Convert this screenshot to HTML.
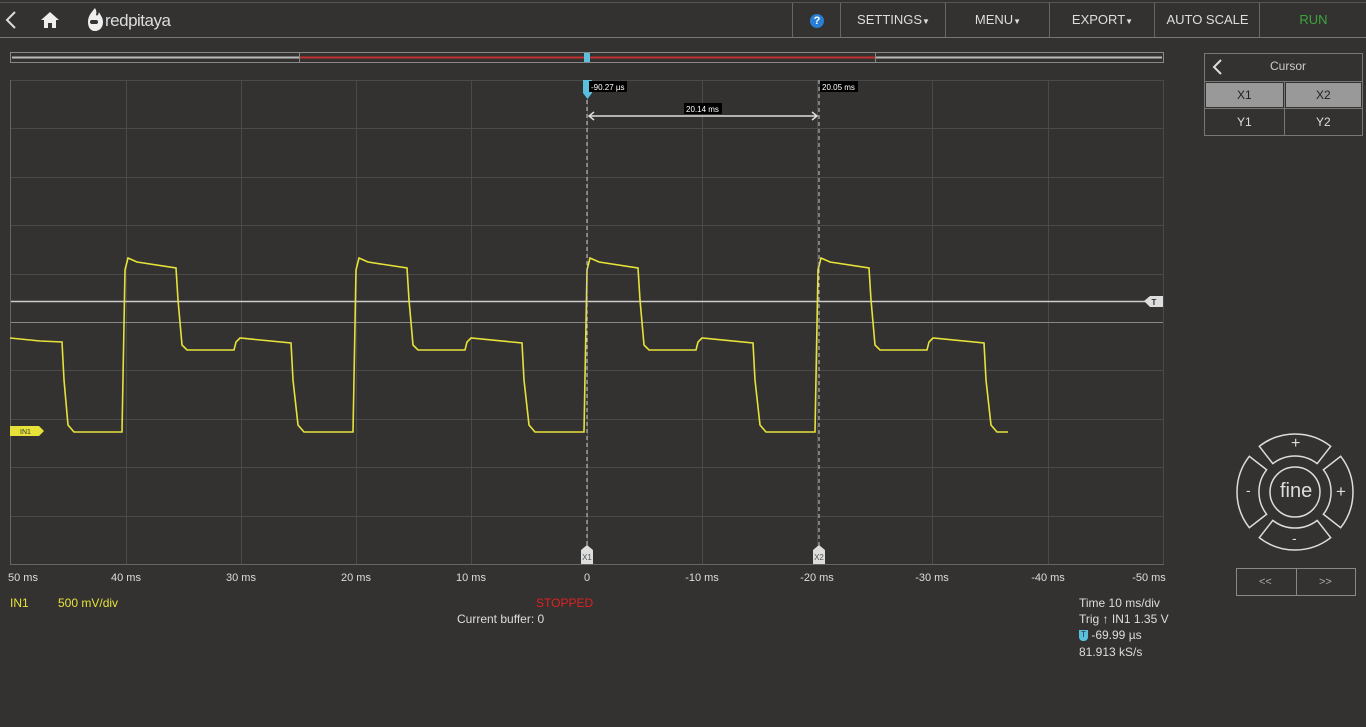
<!DOCTYPE html>
<html><head><meta charset="utf-8"><style>
body{margin:0;width:1366px;height:727px;background:#333230;font-family:"Liberation Sans",sans-serif;overflow:hidden;position:relative;color:#ddd}
.top{position:absolute;left:0;top:2px;width:1366px;height:34px;border-top:1px solid #555;border-bottom:1px solid #777;background:#333230}
.btn{position:absolute;top:0;height:34px;line-height:34px;text-align:center;font-size:13px;color:#ddd;border-left:1px solid #666}
.btn small{font-size:8px}
.t{position:absolute;font-size:11px;color:#ddd;white-space:nowrap}
.c{transform:translateX(-50%)}
</style></head><body>
<div class="top">
<svg style="position:absolute;left:4px;top:7px" width="14" height="20"><path d="M11 2 L3 10 L11 18" stroke="#ddd" stroke-width="2" fill="none"/></svg>
<svg style="position:absolute;left:40px;top:8px" width="20" height="18"><path d="M10 1 L1 9 L4 9 L4 17 L8 17 L8 12 L12 12 L12 17 L16 17 L16 9 L19 9 Z" fill="#eee"/></svg>
<svg style="position:absolute;left:85px;top:4px" width="20" height="26"><path d="M10 1 C6 6 3 9 3 15 C3 21 6 24 10 24 C15 24 18 20 18 15 C18 10 15 8 14 5 C13 9 12 9 11 8 C12 5 11 3 10 1Z" fill="#eee"/><rect x="5" y="13" width="8" height="4" rx="2" fill="#333"/></svg>
<div style="position:absolute;left:105px;top:8px;font-size:17px;color:#ddd;letter-spacing:-0.5px">redpitaya</div>
<div class="btn" style="left:792px;width:48px"><span style="display:inline-block;width:14px;height:14px;border-radius:50%;background:#2a7fd4;color:#fff;font-size:11px;line-height:14px;font-weight:bold;vertical-align:middle">?</span></div>
<div class="btn" style="left:840px;width:105px">SETTINGS<small>▼</small></div>
<div class="btn" style="left:945px;width:104px">MENU<small>▼</small></div>
<div class="btn" style="left:1049px;width:105px">EXPORT<small>▼</small></div>
<div class="btn" style="left:1154px;width:105px">AUTO SCALE</div>
<div class="btn" style="left:1259px;width:107px;color:#3ca53c">RUN</div>
</div>
<svg style="position:absolute;left:0;top:0" width="1366" height="727">
<rect x="10.5" y="52.5" width="1153" height="10" fill="none" stroke="#888"/>
<line x1="12" y1="57.5" x2="299" y2="57.5" stroke="#bbb" stroke-width="2"/>
<line x1="299" y1="57.5" x2="875" y2="57.5" stroke="#c03030" stroke-width="2"/>
<line x1="875" y1="57.5" x2="1162" y2="57.5" stroke="#bbb" stroke-width="2"/>
<line x1="299.5" y1="53" x2="299.5" y2="62" stroke="#888"/>
<line x1="875.5" y1="53" x2="875.5" y2="62" stroke="#888"/>
<rect x="584" y="53" width="6" height="9" fill="#5bc0de"/>
<g stroke="#4a4a48" stroke-width="1">
<line x1="126.5" y1="80" x2="126.5" y2="564"/><line x1="241.5" y1="80" x2="241.5" y2="564"/><line x1="356.5" y1="80" x2="356.5" y2="564"/><line x1="471.5" y1="80" x2="471.5" y2="564"/><line x1="587.5" y1="80" x2="587.5" y2="564"/><line x1="702.5" y1="80" x2="702.5" y2="564"/><line x1="817.5" y1="80" x2="817.5" y2="564"/><line x1="932.5" y1="80" x2="932.5" y2="564"/><line x1="1048.5" y1="80" x2="1048.5" y2="564"/><line x1="1163.5" y1="80" x2="1163.5" y2="564"/>
<line x1="11" y1="80.5" x2="1163" y2="80.5"/><line x1="11" y1="128.5" x2="1163" y2="128.5"/><line x1="11" y1="177.5" x2="1163" y2="177.5"/><line x1="11" y1="225.5" x2="1163" y2="225.5"/><line x1="11" y1="274.5" x2="1163" y2="274.5"/><line x1="11" y1="370.5" x2="1163" y2="370.5"/><line x1="11" y1="419.5" x2="1163" y2="419.5"/><line x1="11" y1="467.5" x2="1163" y2="467.5"/><line x1="11" y1="516.5" x2="1163" y2="516.5"/>
</g>
<line x1="11" y1="322.5" x2="1163" y2="322.5" stroke="#888"/>
<line x1="10.5" y1="80" x2="10.5" y2="564" stroke="#666"/>
<line x1="10" y1="564.5" x2="1164" y2="564.5" stroke="#666"/>
<line x1="11" y1="301.5" x2="1148" y2="301.5" stroke="#ccc" stroke-width="1.5"/>
<path d="M1144 301 L1150 296 L1163 296 L1163 307 L1150 307 Z" fill="#ddd"/>
<text x="1154" y="305" font-size="8" font-family="Liberation Sans" font-weight="bold" fill="#333" text-anchor="middle">T</text>
<path d="M10 338 L40 341 L62 342 L64 380 L68 425 L74 432 L122 432 L125 270 L128 258 L137 262 L176 268 L178 300 L182 345 L187 350 L234 350 L236 342 L240 338 L291 343 L293 380 L298 425 L304 432 L353 432 L356 270 L359 258 L368 262 L407 268 L409 300 L413 345 L418 350 L465 350 L467 342 L471 338 L522 343 L524 380 L529 425 L535 432 L584 432 L587 270 L590 258 L599 262 L638 268 L640 300 L644 345 L649 350 L696 350 L698 342 L702 338 L753 343 L755 380 L760 425 L766 432 L815 432 L818 270 L821 258 L830 262 L869 268 L871 300 L875 345 L880 350 L927 350 L929 342 L933 338 L984 343 L986 380 L991 425 L997 432 L1008 432" fill="none" stroke="#e6e23a" stroke-width="1.6"/>
<path d="M10 426 L39 426 L44 431 L39 436 L10 436 Z" fill="#e6e23a"/>
<text x="20" y="434" font-size="7" font-family="Liberation Sans" fill="#333">IN1</text>
<line x1="587" y1="86" x2="587" y2="548" stroke="#ccc" stroke-dasharray="4,3"/>
<line x1="819" y1="80" x2="819" y2="548" stroke="#ccc" stroke-dasharray="4,3"/>
<path d="M583 80 L592 80 L592 93 L587.5 99 L583 93 Z" fill="#5bc0de"/>
<rect x="589" y="81" width="38" height="11" fill="#000"/><text x="591" y="90" font-size="8" font-family="Liberation Sans" fill="#fff">-90.27 µs</text>
<rect x="820" y="81" width="38" height="11" fill="#000"/><text x="822" y="90" font-size="8" font-family="Liberation Sans" fill="#fff">20.05 ms</text>
<rect x="684" y="103" width="38" height="11" fill="#000"/><text x="686" y="112" font-size="8" font-family="Liberation Sans" fill="#fff">20.14 ms</text>
<line x1="589" y1="116" x2="817" y2="116" stroke="#ddd" stroke-width="1.5"/>
<path d="M594 112 L589 116 L594 120 M812 112 L817 116 L812 120" stroke="#ddd" stroke-width="1.5" fill="none"/>
<path d="M581 564 L581 550 L587 545 L593 550 L593 564 Z" fill="#ddd"/><text x="587" y="560" font-size="8" font-family="Liberation Sans" fill="#555" text-anchor="middle">X1</text>
<path d="M813 564 L813 550 L819 545 L825 550 L825 564 Z" fill="#ddd"/><text x="819" y="560" font-size="8" font-family="Liberation Sans" fill="#555" text-anchor="middle">X2</text>
<rect x="1204.5" y="53.5" width="158" height="82" fill="none" stroke="#777"/>
<line x1="1205" y1="81.5" x2="1362" y2="81.5" stroke="#777"/>
<rect x="1206" y="83" width="77" height="24" fill="#999"/><rect x="1286" y="83" width="75" height="24" fill="#999"/>
<line x1="1205" y1="108.5" x2="1362" y2="108.5" stroke="#777"/>
<line x1="1284.5" y1="82" x2="1284.5" y2="135" stroke="#777"/>
<path d="M1221 60 L1214 67 L1221 74" stroke="#ddd" stroke-width="2" fill="none"/>
<g fill="none" stroke="#ddd" stroke-width="1.5">
<circle cx="1295" cy="492" r="25"/>
<path d="M1259.3 446.3 A58 58 0 0 1 1330.7 446.3 L1317.2 463.6 A36 36 0 0 0 1272.8 463.6 Z"/>
<path d="M1259.3 537.7 A58 58 0 0 0 1330.7 537.7 L1317.2 520.4 A36 36 0 0 1 1272.8 520.4 Z"/>
<path d="M1249.3 456.3 A58 58 0 0 0 1249.3 527.7 L1266.6 514.2 A36 36 0 0 1 1266.6 469.8 Z"/>
<path d="M1340.7 456.3 A58 58 0 0 1 1340.7 527.7 L1323.4 514.2 A36 36 0 0 0 1323.4 469.8 Z"/>
</g>
<rect x="1236.5" y="568.5" width="119" height="27" fill="none" stroke="#888"/>
<line x1="1296.5" y1="568" x2="1296.5" y2="596" stroke="#888"/>
</svg>
<div class="t" style="left:1270px;top:59px;font-size:12px;color:#ccc">Cursor</div>
<div class="t" style="left:1237px;top:88px;font-size:12px;color:#222">X1</div>
<div class="t" style="left:1316px;top:88px;font-size:12px;color:#222">X2</div>
<div class="t" style="left:1237px;top:115px;font-size:12px">Y1</div>
<div class="t" style="left:1316px;top:115px;font-size:12px">Y2</div>
<div class="t" style="left:1280px;top:480px;font-size:20px;color:#ddd">fine</div>
<div class="t" style="left:1291px;top:435px;font-size:16px">+</div>
<div class="t" style="left:1292px;top:530px;font-size:14px">-</div>
<div class="t" style="left:1246px;top:482px;font-size:14px">-</div>
<div class="t" style="left:1336px;top:482px;font-size:17px">+</div>
<div class="t" style="left:1259px;top:576px;color:#aaa">&lt;&lt;</div>
<div class="t" style="left:1319px;top:576px;color:#aaa">&gt;&gt;</div>
<div class="t c" style="left:23px;top:572px">50 ms</div>
<div class="t c" style="left:126px;top:572px">40 ms</div>
<div class="t c" style="left:241px;top:572px">30 ms</div>
<div class="t c" style="left:356px;top:572px">20 ms</div>
<div class="t c" style="left:471px;top:572px">10 ms</div>
<div class="t c" style="left:587px;top:572px">0</div>
<div class="t c" style="left:702px;top:572px">-10 ms</div>
<div class="t c" style="left:817px;top:572px">-20 ms</div>
<div class="t c" style="left:932px;top:572px">-30 ms</div>
<div class="t c" style="left:1048px;top:572px">-40 ms</div>
<div class="t c" style="left:1149px;top:572px">-50 ms</div>
<div class="t" style="left:10px;top:596px;font-size:12px;color:#e6e23a">IN1</div>
<div class="t" style="left:58px;top:596px;font-size:12px;color:#e6e23a">500 mV/div</div>
<div class="t" style="left:536px;top:596px;font-size:12px;color:#e02020">STOPPED</div>
<div class="t" style="left:457px;top:612px;font-size:12px">Current buffer: 0</div>
<div class="t" style="left:1079px;top:596px;font-size:12px">Time 10 ms/div</div>
<div class="t" style="left:1079px;top:612px;font-size:12px">Trig ↑ IN1 1.35 V</div>
<div class="t" style="left:1079px;top:628px;font-size:12px"><span style="display:inline-block;width:9px;height:11px;background:#5bc0de;color:#333;font-size:8px;text-align:center;vertical-align:middle;border-radius:0 0 4px 4px">T</span> -69.99 µs</div>
<div class="t" style="left:1079px;top:645px;font-size:12px">81.913 kS/s</div>
</body></html>
